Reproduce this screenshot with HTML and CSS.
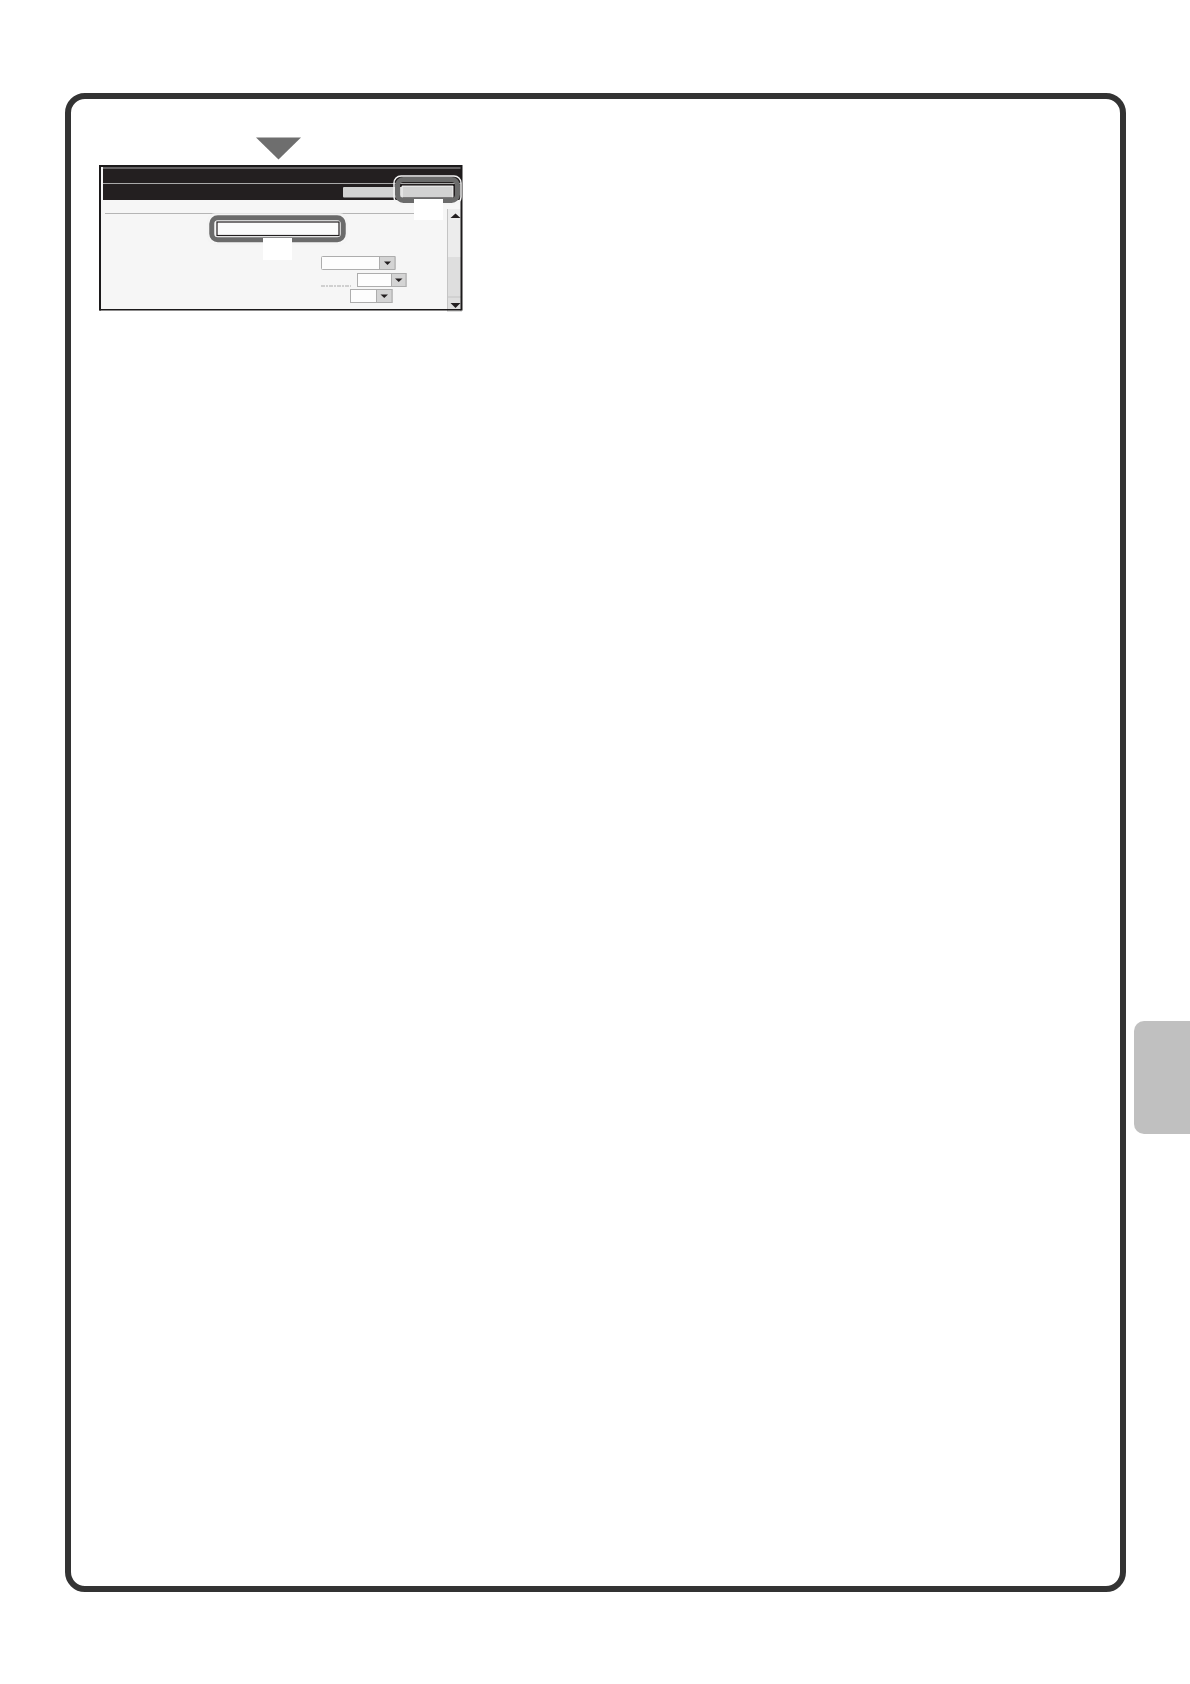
FILE: index.html
```html
<!DOCTYPE html>
<html lang="en">
<head>
<meta charset="utf-8">
<title>Settings screen step</title>
<link rel="stylesheet" href="styles.css">
</head>
<body>
<main class="page">
  <section class="frame">
    <svg class="figure" viewBox="99 136 364 176" width="364" height="176" role="img" aria-label="Settings screen with the input field and the top right button highlighted">
      <!-- step arrow -->
      <polygon class="step-arrow" points="256,137.500 301,137.500 278.500,159.500"/>

      <!-- screen -->
      <rect class="screen-bg" x="100" y="165" width="362" height="145"/>
      <rect class="title-bar" x="103" y="167" width="359" height="33"/>
      <path class="bar-line" d="M103 168H462M103 183.500H462"/>
      <path class="rule" d="M105 213.500H414"/>
      <rect class="btn" x="343" y="187" width="60" height="10.500" rx="1"/>

      <!-- scrollbar -->
      <rect class="track" x="447" y="209" width="15" height="103"/>
      <rect class="track-top" x="447" y="209" width="15" height="48"/>
      <path class="track-line" d="M447.500 209V311M447 297H462"/>
      <polygon class="scroll-arrow" points="450.500,218 460.500,218 455.500,213.500"/>
      <polygon class="scroll-arrow" points="450.500,303 460.500,303 455.500,308"/>

      <!-- select boxes -->
      <g>
        <rect class="select" x="321.500" y="256.500" width="73.500" height="13" rx="1"/>
        <rect class="select-btn" x="379.500" y="256.500" width="15.500" height="13"/>
        <polygon class="select-arrow" points="384,261.500 391,261.500 387.500,265"/>
      </g>
      <g>
        <rect class="select" x="357.500" y="273.500" width="48.500" height="13"/>
        <rect class="select-btn" x="391.500" y="273.500" width="14.500" height="13"/>
        <polygon class="select-arrow" points="395,278.500 402.500,278.500 398.750,282"/>
      </g>
      <g>
        <rect class="select" x="350.500" y="289.500" width="41.500" height="13"/>
        <rect class="select-btn" x="376.500" y="289.500" width="15.500" height="13"/>
        <polygon class="select-arrow" points="380.500,294.500 388,294.500 384.250,298"/>
      </g>
      <path class="tiny-label" d="M321 286H351"/>

      <path class="screen-border" d="M100 310.500V166H461.500V310.500"/>
      <path class="screen-base" d="M99.500 309.700H461"/>

      <!-- highlight: top right button -->
      <rect class="halo" x="394" y="176" width="67" height="28" rx="7"/>
      <rect class="btn" x="402" y="186" width="51" height="11.500"/>
      <path class="btn-edge" d="M402 197.500V186H453V197.500"/>
      <rect class="callout" x="397.500" y="179.500" width="60" height="21" rx="6"/>
      <rect class="patch" x="414" y="199" width="29" height="21"/>

      <!-- highlight: input field -->
      <rect class="halo" x="208" y="214" width="139" height="30" rx="7"/>
      <rect class="input" x="217" y="222" width="122" height="13.500"/>
      <rect class="callout" x="211.750" y="217.750" width="131.500" height="22" rx="6"/>
      <rect class="patch" x="263" y="238" width="29" height="22"/>
    </svg>
  </section>
  <aside class="thumb-tab"></aside>
</main>
</body>
</html>
```
FILE: styles.css
```css
* {
  box-sizing: border-box;
}

html,
body {
  margin: 0;
  background: #fff;
}

.page {
  display: flex;
  align-items: flex-start;
  gap: 8px;
  width: 1190px;
  height: 1684px;
  padding: 93px 0 0 65px;
}

.frame {
  flex: 0 0 1061px;
  height: 1499px;
  padding: 37px 0 0 28px;
  border: 6px solid #333;
  border-radius: 20px;
}

.figure {
  display: block;
  filter: blur(0.5px);
}

.thumb-tab {
  flex: 1;
  height: 113px;
  margin-top: 928px;
  background: #c0c0c0;
  border-radius: 10px 0 0 10px;
}

.step-arrow {
  fill: #6e6e6e;
}

.screen-bg {
  fill: #f6f6f6;
}

.title-bar {
  fill: #231f20;
}

.bar-line {
  fill: none;
  stroke: #a9a9a9;
  stroke-width: 1;
}

.rule {
  fill: none;
  stroke: #b5b5b5;
  stroke-width: 1;
}

.btn {
  fill: #d2d2d2;
}

.btn-edge {
  fill: none;
  stroke: #fff;
  stroke-width: 0.800;
}

.track {
  fill: #dedede;
}

.track-top {
  fill: #ececec;
}

.track-line {
  fill: none;
  stroke: #c4c4c4;
  stroke-width: 1;
}

.scroll-arrow {
  fill: #231f20;
}

.select {
  fill: #fdfdfd;
  stroke: #adadad;
  stroke-width: 1;
}

.select-btn {
  fill: #d4d4d4;
  stroke: #adadad;
  stroke-width: 1;
}

.select-arrow {
  fill: #231f20;
}

.tiny-label {
  fill: none;
  stroke: #8a8a8a;
  stroke-width: 0.700;
  stroke-dasharray: 4 1 2 1;
}

.screen-border {
  fill: none;
  stroke: #1c1a1b;
  stroke-width: 2;
}

.screen-base {
  fill: none;
  stroke: #1c1a1b;
  stroke-width: 1.400;
}

.halo {
  fill: none;
  stroke: #f4f4f4;
  stroke-width: 1.500;
}

.callout {
  fill: none;
  stroke: #6b6b6b;
  stroke-width: 5;
}

.input {
  fill: #fbfbfb;
  stroke: #231f20;
  stroke-width: 1.200;
}

.patch {
  fill: #fff;
}
```
